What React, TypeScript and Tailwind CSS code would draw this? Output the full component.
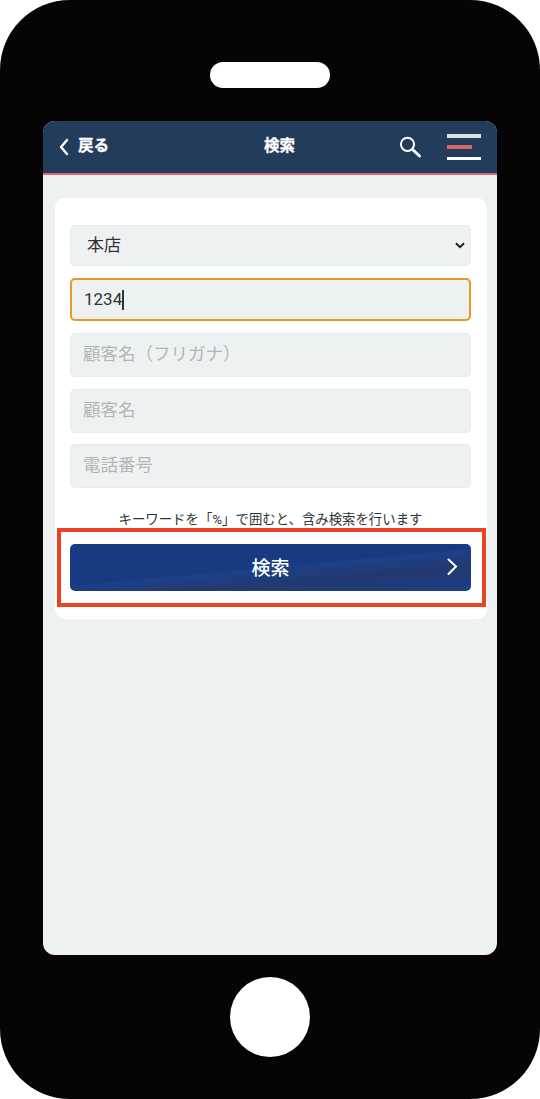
import React from "react";

const font = "font-['Roboto','Noto_Sans_CJK_JP',sans-serif]";

function Field({ placeholder, className }: { placeholder: string; className: string }) {
  return (
    <input
      placeholder={placeholder}
      readOnly
      className={`block w-full h-[44px] rounded-[5px] bg-[#eef1f2] border border-[#e8ebec] pl-[12px] pb-[2px] text-[17.5px] leading-none text-[#333] placeholder:text-[#b3b5b6] outline-none ${className}`}
    />
  );
}

export default function App() {
  return (
    <div className="bg-white w-[540px] h-[1099px]">
      <div className={`w-[540px] h-[1099px] rounded-[70px] bg-[#070405] pt-[62px] flex flex-col ${font}`}>
        <div className="mx-auto w-[120px] h-[26px] rounded-full bg-white" />

        <div className="mt-[33px] mx-[43px] h-[834px] rounded-[12px] bg-[#eef1f2] overflow-hidden">
          <header className="h-[54px] bg-[#243c5c] border-b-2 border-[#d9686a] flex items-center pl-[15px] pr-[16px] text-white">
            <svg width="11" height="18" viewBox="0 0 11 18" fill="none" className="shrink-0">
              <path d="M9 2L3 9L9 16" stroke="#fff" strokeWidth="2.4" strokeLinecap="round" strokeLinejoin="round" />
            </svg>
            <span className="ml-[9px] w-[31px] text-[15.5px] font-bold leading-none whitespace-nowrap [-webkit-text-stroke:0.3px_white]">戻る</span>
            <span className="ml-[155px] w-[32px] text-[15.5px] font-bold leading-none whitespace-nowrap [-webkit-text-stroke:0.3px_white]">検索</span>
            <svg width="24" height="24" viewBox="0 0 24 24" fill="none" className="ml-[103px] shrink-0">
              <circle cx="8.5" cy="9.3" r="6.6" stroke="#fff" strokeWidth="2" />
              <path d="M13.5 14.5L20.5 21" stroke="#fff" strokeWidth="3" strokeLinecap="round" />
            </svg>
            <div className="ml-[24px] w-[34px] flex flex-col shrink-0 -mt-[1px]">
              <div className="h-[4px] w-[34px] bg-[#dfe2e5]" />
              <div className="mt-[7px] h-[4px] w-[25px] bg-[#d9686a]" />
              <div className="mt-[8px] h-[3px] w-[34px] bg-white" />
            </div>
          </header>

          <main className="mt-[23px] ml-[12px] mr-[10px] h-[421px] rounded-[10px] bg-white pl-[15px] pr-[16px] pt-[27px]">
            <div className="h-[41px] rounded-[5px] bg-[#eef1f2] border border-[#e8ebec] flex items-center justify-between pl-[16px] pr-[5px] text-[17px] text-[#333]">
              <span>本店</span>
              <svg width="10" height="7" viewBox="0 0 10 7" fill="none">
                <path d="M1 1.2L5 5.2L9 1.2" stroke="#222" strokeWidth="2" />
              </svg>
            </div>

            <div className="mt-[12px] h-[43px] rounded-[5px] bg-[#eef1f2] border-2 border-[#e39b22] flex items-center pl-[12px] text-[17px] text-[#333]">
              <span>1234</span>
              <span className="w-[2px] h-[20px] bg-[#333]" />
            </div>

            <Field placeholder="顧客名（フリガナ）" className="mt-[12px]" />
            <Field placeholder="顧客名" className="mt-[12px]" />
            <Field placeholder="電話番号" className="mt-[11px]" />

            <p className="mt-[23px] text-center text-[13.4px] leading-[18px] text-[#333] whitespace-nowrap">
              キーワードを「%」で囲むと、含み検索を行います
            </p>

            <div className="relative mt-[15px]">
              <button className="relative w-full h-[47px] rounded-[5px] bg-[linear-gradient(174.7deg,#173a80_0%,#173a80_49%,#1c4089_51%,#22396f_70%,#1b3e87_100%)] flex items-center justify-center pt-[3px] text-white text-[19px] font-medium">
                検索
                <svg width="11" height="18" viewBox="0 0 11 18" fill="none" className="absolute right-[13px] top-[14px]">
                  <path d="M1.5 1.5L9 8.5L1.5 16" stroke="#fff" strokeWidth="2" strokeLinecap="round" />
                </svg>
              </button>
              <div className="absolute -left-[13px] -right-[15px] -top-[16px] -bottom-[16px] border-[4px] border-[#ea4424] pointer-events-none" />
            </div>
          </main>
        </div>

        <div className="mt-[22px] mx-auto w-[80px] h-[80px] rounded-full bg-white" />
      </div>
    </div>
  );
}
